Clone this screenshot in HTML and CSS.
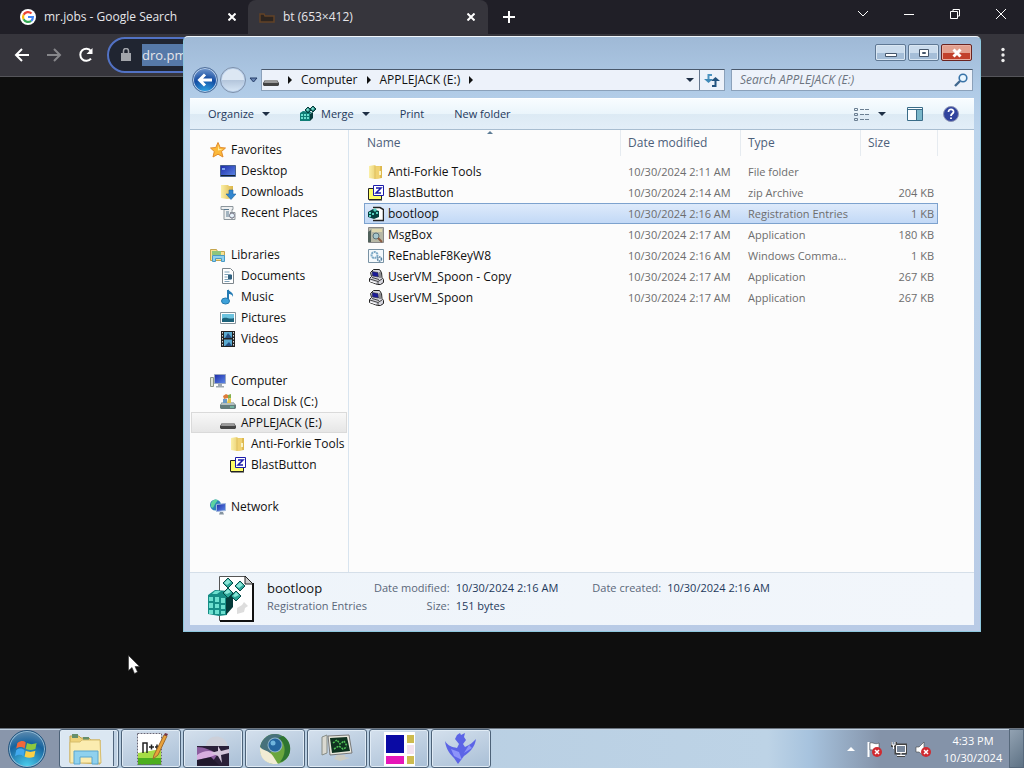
FILE: index.html
```html
<!DOCTYPE html>
<html lang="en">
  <head>
    <meta charset="UTF-8" />
    <meta name="viewport" content="width=device-width, initial-scale=1.0" />
    <title>Desktop</title>
    <link rel="stylesheet" href="styles.css">
  </head>
  <body>
    <!-- shared icons -->
    <svg class="defs" width="0" height="0" aria-hidden="true">
      <linearGradient id="gold" x1="0" x2="1">
        <stop offset="0" stop-color="#fbf0a8" />
        <stop offset="1" stop-color="#dcb548" />
      </linearGradient>
      <linearGradient id="screen" x1="0" y1="0" x2="1" y2="1">
        <stop offset="0" stop-color="#1c2aa8" />
        <stop offset="1" stop-color="#5e8ae8" />
      </linearGradient>
      <symbol id="folder" viewBox="0 0 16 16">
        <path d="M1 2l6-1 1 1h6v12l-7 1-6-1z" fill="url(#gold)" />
        <path d="M7 2v13" stroke="#e0bf5c" fill="none" />
        <path d="M8 3l4-1v12l-4 1z" fill="#f0d272" />
        <path d="M11 7h2v4h-2z" fill="#faf3c4" />
      </symbol>
      <symbol id="zip" viewBox="0 0 16 16">
        <path d="M.5 3.500h5l1 1h7v10H.5z" fill="#ffff66" stroke="#222" />
        <path d="M1 15h13" stroke="#222" />
        <path d="M5.500 .5h10v10h-10z" fill="#fff" stroke="#1b1baa" />
        <path d="M8 3h5l-5 5h5" fill="none" stroke="#1b1baa" stroke-width="1.500" />
      </symbol>
      <symbol id="drive" viewBox="0 0 16 16">
        <path d="M2 8h12l2 3v2l-1 1H1l-1-1v-2z" fill="#444" />
        <path d="M2 8h12l1 3H1z" fill="#999" />
      </symbol>
      <symbol id="monitor" viewBox="0 0 16 16">
        <path d="M2.500 3.500l3-3h6l2 3 .5 5 1.500 2v3l-3 2h-3l-8-3v-3l2-2z" fill="#d5d5dd" stroke="#222" />
        <path d="M4 2.500l6 1 .5 4.500-6-1z" fill="#1b1b99" stroke="#333" stroke-width=".6" />
        <path d="M2 10l8 2.500 4-2.500M10 12.500V15M4 8.500l7 2M12 3v6" stroke="#444" fill="none" />
        <path d="M2 12l6 2" stroke="#fff" />
      </symbol>
      <symbol id="cubes" viewBox="0 0 16 16">
        <path d="M0 7l3-2 9 1-2 2v7H0z" fill="#0f7d75" />
        <path d="M10 8l3-2v6l-3 3z" fill="#053a3a" />
        <path d="M1 8h2v2H1zM4 8h2v2H4zM7 8h2v2H7zM1 11h2v2H1zM4 11h2v2H4zM7 11h2v2H7z" fill="#6de0cf" />
        <path d="M8 1l3 3-3 3-3-3zM13 0l3 3-3 3-3-3z" fill="#1d7c74" stroke="#053a3a" />
        <path d="M8 2l1 2-1 1-2-1zM13 1l1 2-1 1-2-1z" fill="#8be6d8" />
      </symbol>
      <symbol id="reg" viewBox="0 0 48 48">
        <path d="M11.500 1.500h26l7 7v37h-33z" fill="#fff" stroke="#555" />
        <path d="M12 46h33V8" fill="none" stroke="#111" stroke-width="2" />
        <path d="M37 1v8h8z" fill="#ccc" stroke="#222" />
        <path d="M29 33l5-3 2-3 4 4-3 2-1 4-7 2z" fill="#ddd" />
        <path d="M0 20l7-5 14 1 5 2-7 5v17l-8 1-11-2z" fill="#168d86" />
        <path d="M18 23l7-5v14l-7 8z" fill="#053a3a" />
        <g fill="#6de0cf">
          <path d="M1 22h4v4H1zM7 22h4v5H7zM13 23h4v5h-4zM1 28h4v5H1zM7 29h4v4H7zM13 30h4v4h-4zM1 35h4v4H1zM7 35h4v4H7zM13 36h4v3h-4z" />
          <path d="M7 16h6l-4 3H4z" />
        </g>
        <g fill="#2ca597" stroke="#064b48">
          <path d="M20 3l5 5-5 5-5-5zM32 6l5 5-5 5-5-5zM20 13l5 5-5 5-5-5zM28 16l5 5-5 5-5-5z" />
        </g>
        <path d="M20 4l3 3-4 3-3-2zM32 7l3 3-4 3-3-2zM20 14l3 3-4 2-3-1zM28 17l3 3-4 2-2-1z" fill="#8be6d8" />
      </symbol>
      <symbol id="badx" viewBox="0 0 10 10">
        <circle cx="5" cy="5" r="5" fill="#d02a30" />
        <path d="M3 3l4 4M7 3L3 7" stroke="#fff" stroke-width="1.500" />
      </symbol>
    </svg>

    <div class="desktop">
      <div class="browser">
        <div class="tabs">
          <div class="tab">
            <svg class="icon" viewBox="0 0 16 16">
              <circle cx="8" cy="8" r="8" fill="#fff" />
              <g fill="none" stroke-width="2.200">
                <path d="M11.500 4.500A5 5 0 0 0 3.600 5.700" stroke="#ea4335" />
                <path d="M3.600 5.700a5 5 0 0 0 0 4.600" stroke="#fbbc05" />
                <path d="M3.600 10.300a5 5 0 0 0 7.600 1.500" stroke="#34a853" />
                <path d="M11.200 11.800A5 5 0 0 0 12.900 8H8" stroke="#4285f4" />
              </g>
            </svg>
            <span class="tab-title">mr.jobs - Google Search</span>
            <button class="tab-close" aria-label="Close tab"><svg viewBox="0 0 8 8"><path d="M.5 .5l7 7M7.500 .5l-7 7" /></svg></button>
          </div>
          <div class="tab active">
            <svg class="icon" viewBox="0 0 16 16">
              <path d="M1 13V5h4l1 2h9v6z" fill="#2d2520" stroke="#624226" stroke-width="1.500" />
            </svg>
            <span class="tab-title">bt (653×412)</span>
            <button class="tab-close" aria-label="Close tab"><svg viewBox="0 0 8 8"><path d="M.5 .5l7 7M7.500 .5l-7 7" /></svg></button>
          </div>
          <button class="new-tab" aria-label="New tab"><svg viewBox="0 0 12 12"><path d="M6 0v12M0 6h12" /></svg></button>
          <div class="controls">
            <button aria-label="Search tabs"><svg viewBox="0 0 12 12"><path d="M1 3l5 5 5-5" /></svg></button>
            <button aria-label="Minimize"><svg viewBox="0 0 12 12"><path d="M1 6.500h10" /></svg></button>
            <button aria-label="Restore"><svg viewBox="0 0 12 12"><path d="M1.500 3.500h7v7h-7zM4 3V1.500h6.500V8H9" /></svg></button>
            <button aria-label="Close"><svg viewBox="0 0 12 12"><path d="M1 1l10 10M11 1L1 11" /></svg></button>
          </div>
        </div>
        <div class="toolbar">
          <button aria-label="Back"><svg viewBox="0 0 16 16"><path d="M15 8H2M8 2L2 8l6 6" /></svg></button>
          <button class="dim" aria-label="Forward"><svg viewBox="0 0 16 16"><path d="M1 8h13M8 2l6 6-6 6" /></svg></button>
          <button aria-label="Reload"><svg viewBox="0 0 16 16"><path d="M13 11.500A6 6 0 1 1 13 4" /><path d="M14.500 1v6h-6z" fill="#fff" stroke="none" /></svg></button>
          <div class="omnibox">
            <svg viewBox="0 0 10 14"><path d="M0 5h10v8H0z" fill="#a2a5ab" /><path d="M2.500 6V3a2.500 2.500 0 0 1 5 0v3" fill="none" stroke="#a2a5ab" stroke-width="1.500" /></svg>
            <input type="text" value="dro.pm" aria-label="Address">
          </div>
          <button class="more" aria-label="Menu"><svg viewBox="0 0 16 16"><g fill="#eee" stroke="none"><circle cx="8" cy="2.500" r="1.700" /><circle cx="8" cy="8" r="1.700" /><circle cx="8" cy="13.500" r="1.700" /></g></svg></button>
        </div>
      </div>

      <div class="window">
        <div class="titlebar">
          <button aria-label="Minimize"><svg viewBox="0 0 12 10"><path d="M.5 5.500h11v3H.5z" /></svg></button>
          <button aria-label="Maximize"><svg viewBox="0 0 12 10"><path d="M1.500 1.500h9v7h-9zM4.500 4.500h3v1h-3z" /></svg></button>
          <button class="win-close" aria-label="Close"><svg viewBox="0 0 12 10"><path d="M2.500 1.500l7 7M9.500 1.500l-7 7" /></svg></button>
        </div>

        <div class="nav">
          <button class="orb" aria-label="Back"><svg viewBox="0 0 16 16"><path d="M8 2.500L2.500 8 8 13.500M3 8h12" fill="none" stroke="#fff" stroke-width="3" /></svg></button>
          <button class="orb off" aria-label="Forward"></button>
          <button class="history" aria-label="Recent pages"><svg viewBox="0 0 9 6"><path d="M1 1h7L4.500 5z" fill="#6886b5" stroke="#253c66" /></svg></button>
          <div class="address">
            <svg class="icon"><use href="#drive" /></svg>
            <i class="arrow"></i>
            <a href="#">Computer</a>
            <i class="arrow"></i>
            <a href="#">APPLEJACK (E:)</a>
            <i class="arrow"></i>
            <button class="drop" aria-label="Previous locations"><i class="caret"></i></button>
            <button class="refresh" aria-label="Refresh"><svg viewBox="0 0 16 14"><path d="M8 2H4.500v6" fill="none" stroke="#4b93c0" stroke-width="2" /><path d="M0 6h9l-4.500 4z" fill="#3f8ab8" /><path d="M8 13h3.500V8" fill="none" stroke="#23537f" stroke-width="2" /><path d="M7 8h9l-4.500-4z" fill="#23537f" /></svg></button>
          </div>
          <div class="search">
            <input type="search" placeholder="Search APPLEJACK (E:)" aria-label="Search APPLEJACK (E:)">
            <svg viewBox="0 0 14 14"><circle cx="9" cy="5" r="3.800" fill="#e9f6ff" stroke="#3873a8" stroke-width="1.600" /><path d="M6 8l-5 5" stroke="#41688f" stroke-width="2.400" /></svg>
          </div>
        </div>

        <div class="commands">
          <button>Organize <i class="caret"></i></button>
          <button><svg class="icon"><use href="#cubes" /></svg>Merge <i class="caret"></i></button>
          <button>Print</button>
          <button>New folder</button>
          <div class="views">
            <button aria-label="Change view"><svg class="icon" viewBox="0 0 16 16"><g fill="none" stroke="#6b7f92"><path d="M1.500 2.500h3v2h-3zM1.500 7.500h3v2h-3zM1.500 12.500h3v2h-3z" /><path d="M7 3.500h9M7 8.500h9M7 13.500h9" stroke-dasharray="4 1" /></g></svg></button>
            <button aria-label="More views"><i class="caret"></i></button>
            <button aria-label="Preview pane"><svg class="icon" viewBox="0 0 16 16"><path d="M.5 1.500h15v13H.5z" fill="#fafdff" stroke="#3a6c88" /><path d="M10 4h5v10h-5z" fill="#7ab7ca" /><path d="M1 3.500h14M9.500 3v11" stroke="#3a6c88" /></svg></button>
            <button aria-label="Help"><svg class="icon" viewBox="0 0 16 16"><circle cx="8" cy="8" r="7.500" fill="#31449e" stroke="#8b93b5" /><path d="M5.500 6c0-4 5.500-3 5 0C10 8 8 7.500 8 10M8 11.500V13" fill="none" stroke="#fff" stroke-width="1.800" /></svg></button>
          </div>
        </div>

        <div class="body">
          <nav class="side">
            <ul>
              <li><a href="#"><svg class="icon" viewBox="0 0 16 16"><path d="M8 .5l2.200 5 5.300.5-4 3.500 1.500 5.500L8 12.200 3 15l1.300-5.500L.5 6l5.300-.5z" fill="#fcb93a" stroke="#e18b2c" /><path d="M8 3l1 4 4 .5-5 1z" fill="#fff2a8" /></svg>Favorites</a>
                <ul>
                  <li><a href="#"><svg class="icon" viewBox="0 0 16 16"><path d="M.5 2.500h15v11H.5z" fill="url(#screen)" stroke="#46618f" /><path d="M1 12.500h14" stroke="#123" /><path d="M2 5h3v2H2z" fill="#7fa6ef" /></svg>Desktop</a></li>
                  <li><a href="#"><svg class="icon" viewBox="0 0 16 16"><path d="M1 1h7l1 1h4v12l-6 1-6-1z" fill="url(#gold)" /><path d="M9 6h4v4h3l-5 5.500L6 10h3z" fill="#3286cf" stroke="#1f65a5" stroke-width=".6" /></svg>Downloads</a></li>
                  <li><a href="#"><svg class="icon" viewBox="0 0 16 16"><path d="M1 1.500h12v3h-1v10H4v-10H1zM10 7.500h5v7H6" fill="#eef0f1" stroke="#8d969c" /><path d="M4 4.500h5M6 7h3M6 9h3M6 11h5" stroke="#59788f" /><circle cx="12" cy="10.500" r="2.500" fill="#e6f2fa" stroke="#778" /></svg>Recent Places</a></li>
                </ul>
              </li>
              <li><a href="#"><svg class="icon" viewBox="0 0 16 16"><path d="M.5 2.500h6l1 2h7v9H.5z" fill="#f7e193" stroke="#c5a54e" /><path d="M2 4h9v4H2z" fill="#8ec57c" /><path d="M2.500 14.500v-6h12v6h-3v-3h-6v3z" fill="#8fd0ee" stroke="#4a9ac4" /></svg>Libraries</a>
                <ul>
                  <li><a href="#"><svg class="icon" viewBox="0 0 16 16"><path d="M2.500 .5h8l3 3v12h-11z" fill="#fff" stroke="#7d868c" /><path d="M4.500 4h5M4.500 6.500h7M4.500 9h3M4.500 11.500h7M4.500 13.500h5" stroke="#7ea1b8" /><path d="M8 7h4v4H8z" fill="#31617f" /></svg>Documents</a></li>
                  <li><a href="#"><svg class="icon" viewBox="0 0 16 16"><path d="M8 1v11" stroke="#247bb4" stroke-width="2" /><path d="M8 0c1 3 6 3 5 8-1-3-3-3-5-3z" fill="#247bb4" /><ellipse cx="5.500" cy="12" rx="4" ry="3" fill="#3ea2da" stroke="#2478ac" /></svg>Music</a></li>
                  <li><a href="#"><svg class="icon" viewBox="0 0 16 16"><path d="M.5 2.500h15v11H.5z" fill="#fff" stroke="#85929a" /><path d="M2 4h12v8H2z" fill="#6dc3df" /><path d="M2 9c4-3 7 1 12-1v4H2z" fill="#1c627a" /></svg>Pictures</a></li>
                  <li><a href="#"><svg class="icon" viewBox="0 0 16 16"><path d="M1 0h14v16H1z" fill="#222" /><path d="M4 1h8v6H4zM4 8.500h8V15H4z" fill="#5aaad0" /><path d="M5 7l3-5 4 5zM5 15l4-4 3 4z" fill="#264f82" /><path d="M2.500 1v15M13.500 1v15" stroke="#ddd" stroke-dasharray="1.500 1.500" /></svg>Videos</a></li>
                </ul>
              </li>
              <li><a href="#"><svg class="icon" viewBox="0 0 16 16"><path d="M.5 4.500h3v9h-3z" fill="#dfe5d8" stroke="#8b9686" /><path d="M4.500 1.500h11v9h-11z" fill="url(#screen)" stroke="#9ba8c0" /><path d="M8 11h4v2h2v1.500H6V13h2z" fill="#9fa9b0" /></svg>Computer</a>
                <ul>
                  <li><a href="#"><svg class="icon" viewBox="0 0 16 16"><path d="M2 8h11l3 3v3l-1 1H1l-1-1v-3z" fill="#647d7c" /><path d="M2 8h11l2 3H1z" fill="#b3bfbf" /><path d="M3 2l3-2 2 1v3L4 5z" fill="#dd7c3b" /><path d="M8 1l3-1v4L8 5z" fill="#85b04b" /><path d="M3 5h4v4H3z" fill="#699bc7" /><path d="M8 5l3-1v5H7z" fill="#e5c44a" /><path d="M10 13h4" stroke="#7fe7c2" /></svg>Local Disk (C:)</a></li>
                  <li class="current"><a href="#"><svg class="icon"><use href="#drive" /></svg>APPLEJACK (E:)</a>
                    <ul>
                      <li><a href="#"><svg class="icon"><use href="#folder" /></svg>Anti-Forkie Tools</a></li>
                      <li><a href="#"><svg class="icon"><use href="#zip" /></svg>BlastButton</a></li>
                    </ul>
                  </li>
                </ul>
              </li>
              <li><a href="#"><svg class="icon" viewBox="0 0 16 16"><circle cx="5.500" cy="6" r="5.500" fill="#2d84b8" /><path d="M1 4c2-4 5-4 7-3L5 5 3 9 1 8z" fill="#5cd49f" /><path d="M6.500 5.500l9-1v7l-9 1z" fill="url(#screen)" stroke="#9fb7dc" /><path d="M10 13h3l1 2.500H9z" fill="#8694a0" /></svg>Network</a></li>
            </ul>
          </nav>

          <div class="files">
            <table>
              <colgroup>
                <col class="c-name"><col class="c-date"><col class="c-type"><col class="c-size">
              </colgroup>
              <thead>
                <tr><th class="sorted">Name</th><th>Date modified</th><th>Type</th><th>Size</th></tr>
              </thead>
              <tbody>
                <tr><td><svg class="icon"><use href="#folder" /></svg>Anti-Forkie Tools</td><td>10/30/2024 2:11 AM</td><td>File folder</td><td></td></tr>
                <tr><td><svg class="icon"><use href="#zip" /></svg>BlastButton</td><td>10/30/2024 2:14 AM</td><td>zip Archive</td><td>204 KB</td></tr>
                <tr class="selected"><td><svg class="icon" viewBox="0 0 16 16"><path d="M5 1.500h7l3.500 2v11H5" fill="#fff" stroke="#222" stroke-width="1.500" /><path d="M0 6l5-3 6 2v6l-5 2-6-2z" fill="#063f40" /><path d="M1 6h2v2H1zM1 9h2v2H1zM4 7h2v2H4zM5 4l2-2 2 2-2 2zM8 6h2v2H8z" fill="#58cfc0" /></svg>bootloop</td><td>10/30/2024 2:16 AM</td><td>Registration Entries</td><td>1 KB</td></tr>
                <tr><td><svg class="icon" viewBox="0 0 16 16"><path d="M.5 .5h15v15H.5z" fill="#b7b8a6" stroke="#888" /><path d="M0 15V5l3-2v12z" fill="#50615b" /><path d="M4 2h10v3H4z" fill="#ded7ae" /><circle cx="8" cy="9" r="3" fill="#a7c6cc" stroke="#59727a" /><path d="M10 11l4 4" stroke="#8b5c42" stroke-width="2" /></svg>MsgBox</td><td>10/30/2024 2:17 AM</td><td>Application</td><td>180 KB</td></tr>
                <tr><td><svg class="icon" viewBox="0 0 16 16"><path d="M.5 1.500h15v13H.5z" fill="#f4f9fc" stroke="#7992a4" /><circle cx="6.500" cy="7" r="3" fill="none" stroke="#7da9c6" stroke-width="2" stroke-dasharray="2 .6" /><circle cx="11.500" cy="11" r="2" fill="none" stroke="#537fa0" stroke-width="1.500" stroke-dasharray="1.500 .5" /></svg>ReEnableF8KeyW8</td><td>10/30/2024 2:16 AM</td><td>Windows Comma...</td><td>1 KB</td></tr>
                <tr><td><svg class="icon"><use href="#monitor" /></svg>UserVM_Spoon - Copy</td><td>10/30/2024 2:17 AM</td><td>Application</td><td>267 KB</td></tr>
                <tr><td><svg class="icon"><use href="#monitor" /></svg>UserVM_Spoon</td><td>10/30/2024 2:17 AM</td><td>Application</td><td>267 KB</td></tr>
              </tbody>
            </table>
          </div>
        </div>

        <div class="details">
          <svg class="big-icon"><use href="#reg" /></svg>
          <div class="file">
            <h1>bootloop</h1>
            <p>Registration Entries</p>
          </div>
          <dl>
            <dt>Date modified:</dt><dd>10/30/2024 2:16 AM</dd>
            <dt>Size:</dt><dd>151 bytes</dd>
          </dl>
          <dl>
            <dt>Date created:</dt><dd>10/30/2024 2:16 AM</dd>
          </dl>
        </div>
      </div>

      <svg class="cursor" viewBox="0 0 12 19"><path d="M.5 .5v15l3.500-3 2.500 6 3-1.500L7 11.500h4.500z" fill="#fff" stroke="#333" stroke-width=".6" /></svg>

      <div class="taskbar">
        <button class="start" aria-label="Start">
          <svg viewBox="0 0 20 20">
            <path d="M2 5c3-2 5-2 7-.5L8 9.500C6 8 4 8 1 9.500z" fill="#f0683a" />
            <path d="M10 5c3 1.500 5 1 8 0l-1 5c-3 1-5 1-8 0z" fill="#8ec83f" />
            <path d="M1 11c3-2 5-1.500 7 0l-1 5c-2-1.500-4-1.500-7 0z" fill="#42a9ee" />
            <path d="M9 11.500c3 1.500 5 1 8 0l-1 5c-3 1-5 1-8 0z" fill="#fdd045" />
          </svg>
        </button>
        <button class="task stacked" aria-label="Windows Explorer">
          <svg viewBox="0 0 36 36">
            <path d="M2 5h9l2 2h8l2 2h9v24l-30-2z" fill="#eed27a" stroke="#c2a34f" />
            <path d="M4 3h6v4H4zM15 6h6v3h-6z" fill="#678f6b" />
            <path d="M2 11h10l2-2h18l1 23H2z" fill="#fbecb0" stroke="#d7bd6d" />
            <path d="M6 33V20h24v13h-6v-7H12v7z" fill="#8fd1ee" stroke="#5aa6cf" />
          </svg>
        </button>
        <button class="task" aria-label="Notepad++">
          <svg viewBox="0 0 36 36">
            <path d="M4 2h25v32H4z" fill="#fff" />
            <path d="M5 22l23-4v16H5z" fill="#a6dc45" />
            <path d="M5 27h23v7H5z" fill="#4cae1f" />
            <path d="M4.500 2.500h24v31h-24z" fill="none" stroke="#667" stroke-dasharray="2 1" />
            <path d="M10 22V12h4v10M16 16h5M18.500 13.500v5M22 16h4M24 13.500v5" fill="none" stroke="#222" stroke-width="1.500" />
            <path d="M21 24L31 4l3 1-9 19-5 4z" fill="#e9a23b" stroke="#9e6a2e" />
            <path d="M31 4l1-2 3 1-1 2z" fill="#743646" />
          </svg>
        </button>
        <button class="task" aria-label="Media">
          <svg viewBox="0 0 36 36">
            <path d="M11 15C11 4 27 2 32 12l1 8H12z" fill="#cdd0d9" />
            <path d="M2 15h32v20H2z" fill="#2a2038" />
            <path d="M2 16c7 0 15 3 20 8l-4 6-16 1z" fill="#8d5fa0" />
            <path d="M2 24c7-5 15-5 21-1l-8 3-13 3z" fill="#d8aee0" />
            <path d="M2 29l14-3 8 8H2z" fill="#20182c" />
            <path d="M23 15l3 5 8-2v4l-8 2 1 8-4-7-7-3 7-2z" fill="#d4c6da" />
          </svg>
        </button>
        <button class="task" aria-label="Globe">
          <svg viewBox="0 0 36 36">
            <circle cx="18" cy="18" r="15" fill="#6ba63e" />
            <path d="M18 3a15 15 0 0 0-15 15l10 4L28 8c-3-4-7-5-10-5z" fill="#47717b" />
            <path d="M3 16c3 4 9 3 13 9l5 8C10 34 2 28 3 16z" fill="#f1ecd4" />
            <path d="M21 7c9 5 8 17 2 24 12-2 14-20 3-26z" fill="#2e7532" />
            <circle cx="18" cy="14" r="7.500" fill="#8fb3c8" />
            <circle cx="18" cy="14" r="6.500" fill="#2467a0" />
            <circle cx="16" cy="12" r="2.500" fill="#70b6dd" />
          </svg>
        </button>
        <button class="task" aria-label="Virtual machine">
          <svg viewBox="0 0 36 36">
            <path d="M3 6l5-2v18l-5 2z" fill="#dad9d1" stroke="#868c86" />
            <path d="M9 5l21-1 3 18-22 2z" fill="#e9e8dc" stroke="#777" />
            <path d="M11 7l17-1 3 14-18 2z" fill="#0f3320" />
            <path d="M14 12l4-3 3 4 4-3 3 5M15 18l5-3 4 3 4-2" fill="none" stroke="#50c256" stroke-dasharray="2 1" stroke-width="1.500" />
            <path d="M18 24h8v2l5 1-10 3-6-2z" fill="#ccccc2" />
          </svg>
        </button>
        <button class="task" aria-label="Colors">
          <svg viewBox="0 0 36 36">
            <path d="M3 1h31v34H3z" fill="#fff" />
            <path d="M5 4h18v18H5z" fill="#0a0aa4" />
            <path d="M5 25h18v8H5z" fill="#e617b8" />
            <path d="M26 4h7v8h-7zM26 25h7v8h-7z" fill="#cdbb4f" />
            <path d="M26 14h7v9h-7z" fill="#f3e2ef" />
          </svg>
        </button>
        <button class="task" aria-label="Phoenix">
          <svg viewBox="0 0 36 36">
            <path d="M2 10c3 5 7 6 12 7l2-4-4-5 2-4 3-2 1 2 4-2-1 4 2 3-3 4 2 3c5-2 8-5 11-8-1 8-6 13-12 17l-6 8-4-6C8 24 3 19 2 10z" fill="#5c64e6" />
            <path d="M8 18l8 3 3 8-8-4zM26 14l-5 8 8-5z" fill="#8d94fa" />
          </svg>
        </button>
        <div class="tray">
          <button class="up" aria-label="Show hidden icons"></button>
          <svg viewBox="0 0 16 16"><path d="M1.500 1v15" stroke="#fff" stroke-width="2" /><path d="M3 2c3-1 5 2 9 0v7c-4 2-6-1-9 0z" fill="#fff" stroke="#333" stroke-width=".5" /><use href="#badx" x="5" y="6" width="10" height="10" /></svg>
          <svg viewBox="0 0 16 16"><g fill="none" stroke="#444" stroke-width="2"><path d="M4.500 3.500h11v9h-11zM10 13v2M6 15h8M0 1v4h5V1" /></g><path d="M5 4h10v8H5z" fill="#78879b" /><g fill="none" stroke="#fff"><path d="M5.500 4.500h9v7h-9zM10 12v3M6 14.500h8M1 1v3h3V1M2.500 4v4" /></g></svg>
          <svg viewBox="0 0 16 16"><path d="M1 6h3l5-5v14l-5-4H1z" fill="#fff" stroke="#444" stroke-width=".6" /><use href="#badx" x="6" y="6" width="10" height="10" /></svg>
        </div>
        <div class="clock">
          <div>4:33 PM</div>
          <div>10/30/2024</div>
        </div>
        <button class="peek" aria-label="Show desktop"></button>
      </div>
    </div>
  </body>
</html>
```

FILE: styles.css
```css
* {
  box-sizing: border-box;
}

body,
h1,
p,
ul,
dl,
dd {
  margin: 0;
  padding: 0;
}

body {
  font-family: "Open Sans", "Noto Sans", sans-serif;
  font-size: 12px;
  line-height: 16px;
  color: #111;
  background-color: #0e0e0e;
}

ul {
  list-style: none;
}

a {
  color: inherit;
  text-decoration: none;
}

button,
input {
  font: inherit;
  color: inherit;
  padding: 0;
  border: 0;
  background: none;
}

button {
  display: flex;
  align-items: center;
  justify-content: center;
}

svg {
  display: block;
  flex: none;
}

.defs {
  position: absolute;
}

.icon {
  width: 16px;
  height: 16px;
}

.caret {
  border: 4px solid transparent;
  border-top-color: #1e2f45;
  border-bottom: 0;
}

.desktop {
  position: relative;
  min-height: 100vh;
  display: flex;
  flex-direction: column;
  overflow: hidden;
}

/* Browser */
.browser {
  flex: 1;
  color: #e6e6ea;
}

.tabs {
  display: flex;
  height: 34px;
  background-color: #201f27;
}

.tab {
  display: flex;
  align-items: center;
  gap: 8px;
  width: 240px;
  padding: 0 13px 0 11px;
}

.tab:first-child {
  width: 248px;
  padding: 0 12px 0 20px;
}

.tab.active {
  background-color: #36353c;
  border-radius: 8px 8px 0 0;
}

.tab-title {
  flex: 1;
}

.tab-close svg {
  width: 8px;
  height: 8px;
}

.tabs button svg {
  fill: none;
  stroke: #fff;
}

.tab-close svg,
.new-tab svg {
  stroke-width: 2;
}

.new-tab {
  width: 42px;
}

.new-tab svg,
.controls svg {
  width: 12px;
  height: 12px;
}

.controls {
  display: flex;
  margin-left: auto;
}

.controls button {
  width: 46px;
  height: 28px;
}

.toolbar {
  display: flex;
  align-items: center;
  height: 43px;
  padding: 0 5px 0 6px;
  background-color: #36353c;
  border-bottom: 1px solid #55555a;
}

.toolbar button {
  width: 32px;
  height: 32px;
}

.toolbar button svg {
  width: 16px;
  height: 16px;
  fill: none;
  stroke: #fff;
  stroke-width: 2;
}

.toolbar .dim {
  opacity: 0.4;
}

.omnibox {
  flex: 1;
  display: flex;
  align-items: center;
  gap: 11px;
  height: 36px;
  margin-left: 5px;
  padding-left: 12px;
  border: 2px solid #5272c4;
  border-radius: 18px;
  background-color: #202531;
}

.omnibox svg {
  width: 10px;
  height: 14px;
}

.omnibox input {
  width: 48px;
  height: 22px;
  font-size: 13px;
  background-color: #5679a8;
}

.toolbar .more {
  margin-left: 8px;
}

/* Explorer window */
.window {
  position: absolute;
  top: 36px;
  right: 43px;
  bottom: 136px;
  left: 183px;
  display: flex;
  flex-direction: column;
  padding: 0 6px 6px;
  border: 1px solid #8ec7de;
  border-top-color: #f0f6fb;
  border-radius: 5px 5px 0 0;
  background: linear-gradient(#9fb9d6, #afcae6 50px, #bcd4ec 95px, #b9cbe6);
}

.titlebar {
  display: flex;
  justify-content: flex-end;
  gap: 2px;
  padding: 7px 2px;
}

.titlebar button {
  width: 31px;
  height: 17px;
  border: 1px solid #5f7894;
  border-radius: 2px;
  background: linear-gradient(#cbdced 50%, #a5bed8 50%);
  box-shadow: inset 0 0 0 1px #dae7f3;
}

.titlebar svg {
  width: 12px;
  height: 10px;
  fill: #fff;
  stroke: #45566b;
}

.titlebar .win-close {
  border-color: #6a2420;
  background: linear-gradient(#e2a08f 50%, #c2412c 50%);
  box-shadow: inset 0 0 0 1px #e9afa2;
}

.titlebar .win-close svg {
  stroke: #fff;
  stroke-width: 3;
}

.nav {
  display: flex;
  align-items: center;
  height: 24px;
  padding: 0 1px 0 2px;
}

.orb {
  width: 26px;
  height: 26px;
  border: 1px solid #51709b;
  border-radius: 50%;
  background: radial-gradient(circle at 50% 110%, #35b6f1, #154da2 55%, #8dadd9);
  box-shadow: inset 0 0 0 1px #b8cfeb;
}

.orb svg {
  width: 16px;
  height: 16px;
}

.orb.off {
  margin-left: 2px;
  border-color: #7d90aa;
  background: linear-gradient(#dce7f3 50%, #b3c5db 50%, #d8e7f6);
}

.history {
  width: 15px;
}

.history svg {
  width: 9px;
  height: 6px;
}

.address,
.search {
  display: flex;
  align-items: center;
  height: 22px;
  border: 1px solid #8ba1ba;
  border-top-color: #49586b;
  background-color: #edf2fa;
}

.address {
  flex: 1;
  gap: 9px;
  padding-left: 1px;
}

.arrow {
  border: 4px solid transparent;
  border-left-color: #111;
  border-right: 0;
}

.drop {
  margin-left: auto;
}

.address .refresh {
  width: 25px;
  height: 20px;
  margin-left: -4px;
  border-left: 1px solid #66788f;
}

.refresh svg {
  width: 16px;
  height: 14px;
}

.search {
  width: 242px;
  margin-left: 6px;
  padding: 0 4px 0 8px;
}

.search input {
  flex: 1;
  min-width: 0;
  outline: 0;
}

.search input::placeholder {
  color: #6c7480;
  font-style: italic;
}

.search svg {
  width: 14px;
  height: 14px;
}

.commands {
  display: flex;
  align-items: center;
  gap: 30px;
  height: 32px;
  margin-top: 6px;
  padding: 0 15px 0 18px;
  font-size: 11px;
  color: #1e395b;
  border-top: 1px solid #fff;
  border-bottom: 1px solid #a8bdd0;
  background: linear-gradient(#f8fcff, #eaf5fb 50%, #dceaf4 50%, #e3eef8);
}

.commands button {
  gap: 5px;
}

.commands button .caret {
  margin-left: 3px;
}

.views {
  display: flex;
  gap: 20px;
  margin-left: auto;
}

.views button:nth-child(2) {
  margin: 0 1px 0 -14px;
}

.body {
  flex: 1;
  display: flex;
  min-height: 0;
  background-color: #fcfcfc;
}

.side {
  flex: none;
  width: 159px;
  padding: 9px 1px 0;
  border-right: 1px solid #d8e4ef;
}

.side > ul > li {
  margin-bottom: 21px;
}

.side a {
  display: flex;
  align-items: center;
  gap: 5px;
  height: 21px;
  padding-left: 19px;
  white-space: nowrap;
}

.side li li a {
  padding-left: 29px;
}

.side li li li a {
  padding-left: 39px;
}

.side .current > a {
  border: 1px solid #dadada;
  padding-left: 28px;
  background: linear-gradient(#f8f8f8, #e6e6e6);
}

.files {
  flex: 1;
  padding-left: 15px;
}

table {
  width: 574px;
  table-layout: fixed;
  border-spacing: 0;
}

.c-name {
  width: 257px;
}

.c-date,
.c-type {
  width: 120px;
}

th {
  position: relative;
  height: 26px;
  padding: 0 0 0 7px;
  font-weight: 400;
  text-align: left;
  color: #4c607a;
  border-right: 1px solid #e6ebf0;
}

th:first-child {
  padding-left: 3px;
}

.sorted::after {
  content: "";
  position: absolute;
  top: 1px;
  left: 48%;
  border: 3px solid transparent;
  border-top: 0;
  border-bottom-color: #5d7c95;
}

tbody::before {
  content: "";
  display: block;
  height: 5px;
}

td {
  height: 21px;
  padding: 0 4px 0 7px;
  font-size: 11px;
  color: #6d6d6d;
  white-space: nowrap;
}

td:first-child {
  display: flex;
  align-items: center;
  gap: 4px;
  padding-left: 4px;
  font-size: 12px;
  color: #111;
}

td:last-child {
  text-align: right;
}

.selected {
  background: linear-gradient(#dfebfb, #c1d8f6);
  outline: 1px solid #7da2ce;
  outline-offset: -1px;
}

.details {
  display: flex;
  align-items: flex-start;
  height: 53px;
  padding: 2px 18px;
  font-size: 11px;
  line-height: 18px;
  color: #5a6779;
  border-top: 1px solid #d5dfe9;
  background: linear-gradient(90deg, #eef4fa, #f2f6fb);
}

.big-icon {
  width: 48px;
  height: 48px;
}

.file {
  width: 118px;
  padding: 4px 0 0 11px;
  white-space: nowrap;
}

.file h1 {
  font-size: 13px;
  font-weight: 400;
  color: #111;
}

.details dl {
  display: grid;
  grid-template-columns: auto auto;
  column-gap: 6px;
  margin-right: 34px;
  padding-top: 4px;
}

.details dt {
  text-align: right;
}

.details dd {
  color: #1e395b;
}

.cursor {
  position: absolute;
  top: 655px;
  left: 128px;
  width: 12px;
  height: 19px;
}

/* Taskbar */
.taskbar {
  display: flex;
  height: 40px;
  border-top: 1px solid #6b747f;
  background: linear-gradient(90deg, #8996ab 60px, #b5cbdf 90px, #bdd3e6 75%, #a7c3de 79%, #8493a9 86%);
  box-shadow: inset 0 1px 0 #c2d2e2;
}

.start {
  width: 38px;
  height: 38px;
  margin: 1px 13px 0 8px;
  border: 1px solid #24557f;
  border-radius: 50%;
  background: radial-gradient(circle at 50% 100%, #4dd1ef, #17649f 60%, #7899b4);
  box-shadow: inset 0 0 0 1px #93bbd5;
}

.start svg {
  width: 24px;
  height: 24px;
}

.task {
  width: 60px;
  margin-right: 2px;
  border: 1px solid #4d6278;
  border-radius: 3px;
  background: linear-gradient(160deg, #d4e0ed, #a9bfd6);
  box-shadow: inset 0 0 0 1px #e0ebf5;
}

.task.stacked {
  padding-right: 6px;
  background: linear-gradient(90deg, #dbe7f2 53px, #51667d 53px, #51667d 54px, #bed0e2 54px);
}

.task svg {
  width: 36px;
  height: 36px;
}

.tray {
  display: flex;
  align-items: center;
  gap: 8px;
  margin-left: auto;
}

.tray svg {
  width: 16px;
  height: 16px;
}

.up {
  margin-right: 4px;
  border: 4px solid transparent;
  border-top: 0;
  border-bottom-color: #fff;
}

.clock {
  width: 78px;
  padding: 3px 0 0 6px;
  font-size: 11px;
  line-height: 17px;
  color: #fff;
  text-align: center;
}

.peek {
  width: 15px;
  border: 1px solid #56687b;
  background: linear-gradient(135deg, #92a2b2, #5e7285);
}
```
